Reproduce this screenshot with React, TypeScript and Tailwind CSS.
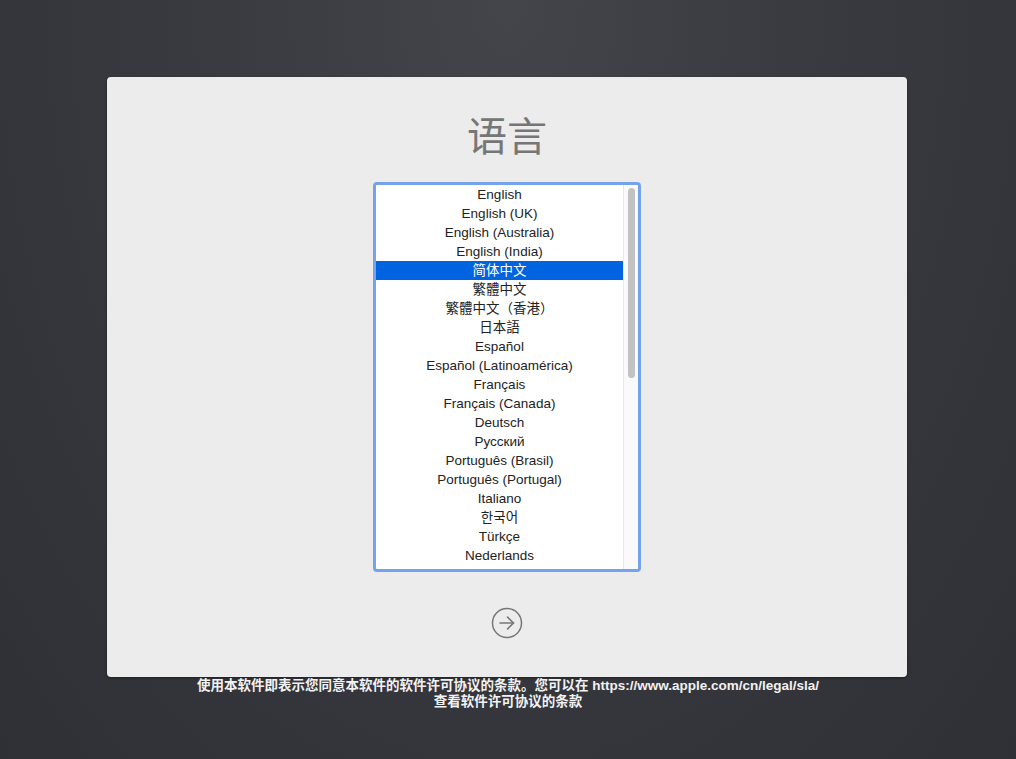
import React from "react";

const items = [
  "English",
  "English (UK)",
  "English (Australia)",
  "English (India)",
  "简体中文",
  "繁體中文",
  "繁體中文（香港）",
  "日本語",
  "Español",
  "Español (Latinoamérica)",
  "Français",
  "Français (Canada)",
  "Deutsch",
  "Русский",
  "Português (Brasil)",
  "Português (Portugal)",
  "Italiano",
  "한국어",
  "Türkçe",
  "Nederlands",
];

const font = {
  fontFamily:
    '"Liberation Sans", "Noto Sans CJK SC", "Noto Sans CJK KR", "Noto Sans CJK JP", sans-serif',
};

export default function App() {
  return (
    <div
      className="w-[1016px] h-[759px] overflow-hidden flex flex-col items-center bg-[radial-gradient(ellipse_at_50%_0%,#44454b_0%,#3a3b41_40%,#2f3035_100%)]"
      style={font}
    >
      <div className="mt-[77px] mr-[2px] w-[800px] h-[600px] bg-[#ececec] rounded-[4px] shadow-[0_1px_3px_rgba(0,0,0,0.4)] flex flex-col items-center">
        <div
          className="pt-[32px] text-[40px] leading-[50px] text-[#767676]"
          style={{ fontFamily: '"Noto Sans CJK SC", sans-serif' }}
        >
          语言
        </div>
        <div className="mt-[23px] w-[268px] h-[390px] border-[3px] border-[#75a3eb] rounded-[4px] bg-white flex overflow-hidden">
          <div className="w-[247px] h-full overflow-hidden">
            {items.map((t, i) => (
              <div
                key={t}
                className={
                  "h-[19px] leading-[19px] text-[13.5px] text-center " +
                  (i === 4 ? "bg-[#0064e1] text-white" : "text-[#222222]")
                }
              >
                {t}
              </div>
            ))}
          </div>
          <div className="w-[15px] h-full border-l border-[#e8e8e8] bg-[#fafafa] flex justify-center pt-[3px]">
            <div className="w-[7px] h-[190px] rounded-full bg-[#c2c2c2]" />
          </div>
        </div>
        <div className="mt-[35px]">
          <svg width="32" height="32" viewBox="0 0 32 32">
            <circle cx="16" cy="16" r="14.5" fill="none" stroke="#777777" strokeWidth="1.5" />
            <path d="M9 16h13.5" stroke="#777777" strokeWidth="1.6" fill="none" strokeLinecap="round" />
            <path d="M16.5 10l6 6-6 6" stroke="#777777" strokeWidth="1.6" fill="none" strokeLinecap="round" strokeLinejoin="round" />
          </svg>
        </div>
      </div>
      <div className="mt-[1px] text-center text-[13.5px] leading-[16px] font-bold text-[#f2f2f2]">
        <div>使用本软件即表示您同意本软件的软件许可协议的条款。您可以在 https://www.apple.com/cn/legal/sla/</div>
        <div>查看软件许可协议的条款</div>
      </div>
    </div>
  );
}
